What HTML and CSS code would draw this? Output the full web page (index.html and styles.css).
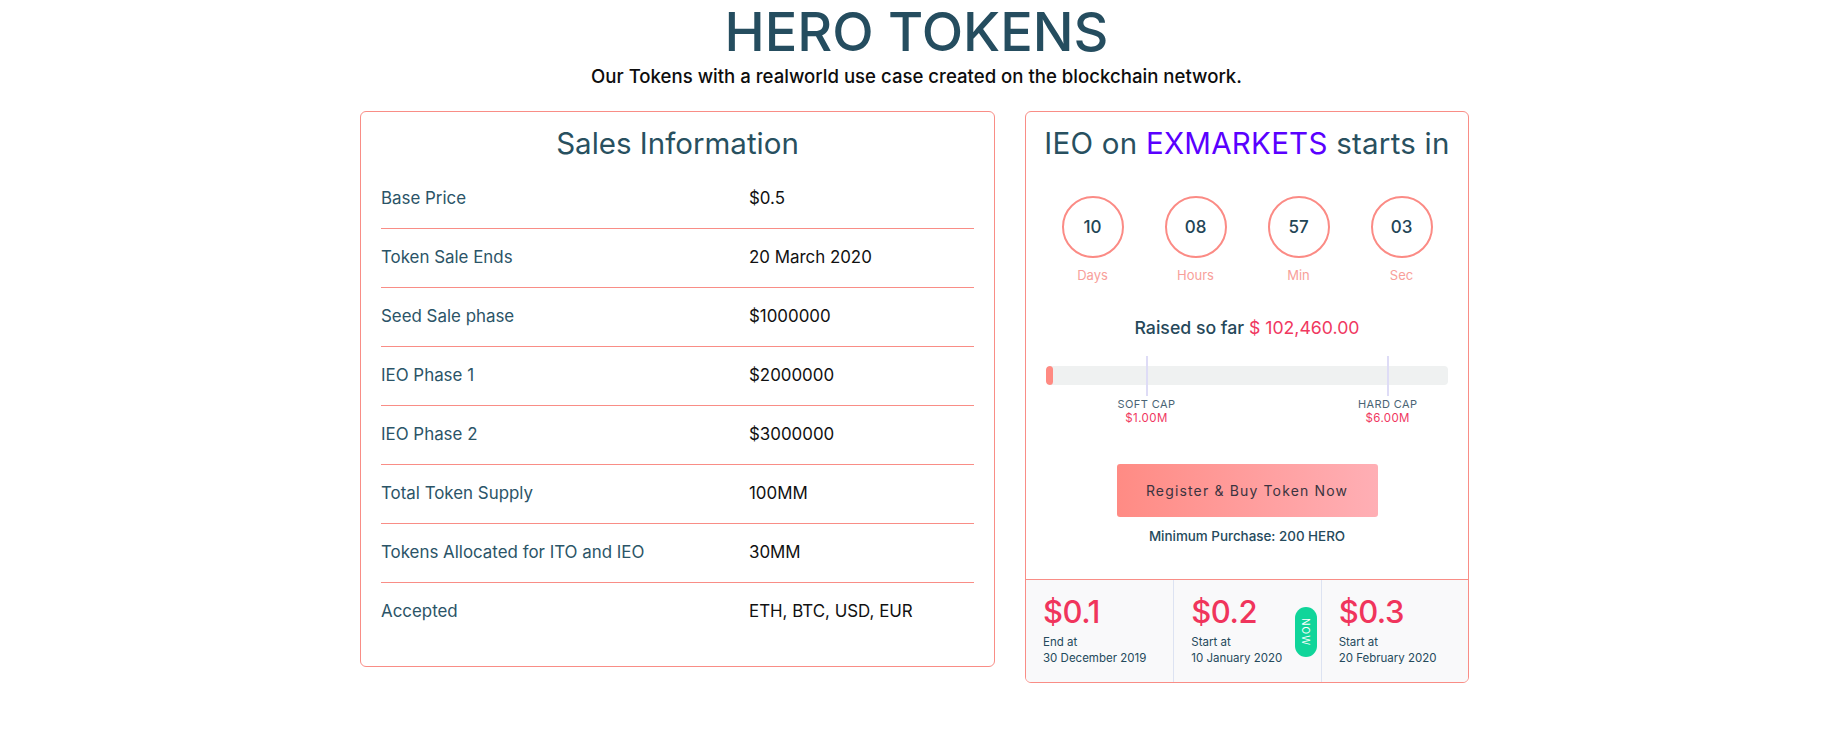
FILE: index.html
```html
<!DOCTYPE html>
<html lang="en">
<head>
<meta charset="utf-8">
<title>Hero Tokens</title>
<link rel="stylesheet" href="styles.css">
</head>
<body>
<header class="hero-head">
  <h1 class="hero-title">HERO TOKENS</h1>
  <p class="hero-sub">Our Tokens with a realworld use case created on the blockchain network.</p>
</header>
<main class="cards">
  <section class="card sales">
    <h2 class="card-title">Sales Information</h2>
    <div class="rows">
      <div class="row"><span class="label">Base Price</span><span class="value">$0.5</span></div>
      <div class="row"><span class="label">Token Sale Ends</span><span class="value">20 March 2020</span></div>
      <div class="row"><span class="label">Seed Sale phase</span><span class="value">$1000000</span></div>
      <div class="row"><span class="label">IEO Phase 1</span><span class="value">$2000000</span></div>
      <div class="row"><span class="label">IEO Phase 2</span><span class="value">$3000000</span></div>
      <div class="row"><span class="label">Total Token Supply</span><span class="value">100MM</span></div>
      <div class="row"><span class="label">Tokens Allocated for ITO and IEO</span><span class="value">30MM</span></div>
      <div class="row"><span class="label">Accepted</span><span class="value">ETH, BTC, USD, EUR</span></div>
    </div>
  </section>
  <section class="card ieo">
    <h2 class="card-title">IEO on <span class="brand">EXMARKETS</span> starts in</h2>
    <div class="countdown">
      <div class="unit"><div class="circle">10</div><div class="unit-label">Days</div></div>
      <div class="unit"><div class="circle">08</div><div class="unit-label">Hours</div></div>
      <div class="unit"><div class="circle">57</div><div class="unit-label">Min</div></div>
      <div class="unit"><div class="circle">03</div><div class="unit-label">Sec</div></div>
    </div>
    <p class="raised">Raised so far <span class="amount">$ 102,460.00</span></p>
    <div class="progress">
      <div class="track"><div class="fill" style="width: 7px"></div></div>
      <div class="marker" style="left: 25%"></div>
      <div class="marker" style="left: 85%"></div>
    </div>
    <div class="caps">
      <div class="cap" style="left: 25%"><span class="cap-name">SOFT CAP</span><span class="cap-val">$1.00M</span></div>
      <div class="cap" style="left: 85%"><span class="cap-name">HARD CAP</span><span class="cap-val">$6.00M</span></div>
    </div>
    <div class="btn-wrap"><a class="buy-btn" href="#">Register &amp; Buy Token Now</a></div>
    <p class="min">Minimum Purchase: 200 HERO</p>
    <div class="phases">
      <div class="phase"><div class="price">$0.1</div><div class="when">End at<br>30 December 2019</div></div>
      <div class="phase current"><div class="price">$0.2</div><div class="when">Start at<br>10 January 2020</div><span class="now">NOW</span></div>
      <div class="phase"><div class="price">$0.3</div><div class="when">Start at<br>20 February 2020</div></div>
    </div>
  </section>
</main>
</body>
</html>
```

FILE: styles.css
```css
* { box-sizing: border-box; }

body {
  margin: 0;
  background: #fff;
  font-family: "Inter", "Noto Sans", sans-serif;
  color: #264e60;
}

.hero-head {
  text-align: center;
  padding-top: 5px;
}

.hero-title {
  margin: 0;
  font-size: 54px;
  line-height: 54px;
  font-weight: 500;
  color: #254d5f;
}

.hero-sub {
  margin: 5px 0 0;
  font-size: 18.6px;
  line-height: 24px;
  font-weight: 500;
  color: #0d0d0d;
}

.cards {
  width: 1113px;
  margin: 23px auto 0;
  display: flex;
  align-items: flex-start;
  gap: 30px;
}

.card {
  border: 1px solid #f98d86;
  border-radius: 6px;
  background: #fff;
}

.card-title {
  margin: 0;
  text-align: center;
  font-size: 29.5px;
  line-height: 36px;
  font-weight: 400;
  letter-spacing: 0;
  color: #28505f;
}

.ieo .card-title { letter-spacing: 0.25px; }

.sales {
  width: 635px;
  padding: 13px 20px 25px;
}

.rows { margin-top: 9px; }

.row {
  display: grid;
  grid-template-columns: 368px 1fr;
  padding: 15px 0 17px;
  line-height: 26px;
  font-size: 16.9px;
  border-bottom: 1px solid #f98d86;
}

.row:last-child { border-bottom: none; }

.label { color: #2b5467; }
.value { color: #111; }

.ieo {
  width: 444px;
  padding-top: 13px;
  overflow: hidden;
}

.brand { color: #5a00ff; }

.countdown {
  display: grid;
  grid-template-columns: repeat(4, 1fr);
  padding: 0 15px;
  margin-top: 35px;
}

.unit {
  display: flex;
  flex-direction: column;
  align-items: center;
}

.circle {
  width: 62px;
  height: 62px;
  border: 2px solid #fb8b85;
  border-radius: 50%;
  display: flex;
  align-items: center;
  justify-content: center;
  font-size: 17px;
  font-weight: 500;
  color: #234556;
}

.unit-label {
  margin-top: 8px;
  font-size: 13px;
  line-height: 18px;
  color: #f8a09a;
}

.raised {
  margin: 32px 0 0;
  text-align: center;
  font-size: 17.7px;
  line-height: 24px;
  font-weight: 500;
  color: #26485a;
}

.amount {
  font-weight: 400;
  color: #f0385f;
}

.progress {
  position: relative;
  margin: 16px 20px 0;
  height: 40px;
  padding-top: 10px;
}

.track {
  height: 19px;
  background: #eff1f1;
  border-radius: 4px;
  overflow: hidden;
}

.fill {
  height: 100%;
  background: #ff8a82;
  border-radius: 4px;
}

.marker {
  position: absolute;
  top: 0;
  width: 2px;
  height: 40px;
  margin-left: -1px;
  background: #dedcf6;
}

.caps {
  position: relative;
  margin: 1px 20px 0;
  height: 28px;
}

.cap {
  position: absolute;
  top: 0;
  transform: translateX(-50%);
  display: flex;
  flex-direction: column;
  align-items: center;
  font-size: 11px;
  line-height: 14px;
  letter-spacing: 0.4px;
  white-space: nowrap;
}

.cap-name { color: #4a6474; }
.cap-val { color: #f0385f; font-size: 11.5px; }

.btn-wrap {
  display: flex;
  justify-content: center;
  margin-top: 39px;
}

.buy-btn {
  display: flex;
  align-items: center;
  justify-content: center;
  width: 261px;
  height: 53px;
  border-radius: 3px;
  background: linear-gradient(90deg, #ff8b84, #ffafb5);
  color: #3b3440;
  font-size: 14px;
  letter-spacing: 1.15px;
  text-decoration: none;
}

.min {
  margin: 10px 0 0;
  text-align: center;
  font-size: 13.4px;
  line-height: 18px;
  font-weight: 500;
  color: #254a5c;
}

.phases {
  margin-top: 34px;
  border-top: 1px solid #f98d86;
  background: #f9f9fa;
  display: grid;
  grid-template-columns: repeat(3, 1fr);
  height: 103px;
}

.phase {
  position: relative;
  padding: 13px 0 0 17px;
  border-left: 1px solid #dde3f2;
}

.phase:first-child { border-left: none; }

.price {
  font-size: 31px;
  line-height: 38px;
  font-weight: 500;
  color: #f0355c;
  letter-spacing: -0.5px;
}

.when {
  margin-top: 3px;
  font-size: 11.5px;
  line-height: 16px;
  color: #254a5c;
}

.now {
  position: absolute;
  top: 27px;
  right: 4px;
  width: 22px;
  height: 50px;
  border-radius: 11px;
  background: #10d59a;
  color: #fff;
  font-size: 10px;
  letter-spacing: 1px;
  writing-mode: vertical-rl;
  display: flex;
  align-items: center;
  justify-content: center;
}
```
